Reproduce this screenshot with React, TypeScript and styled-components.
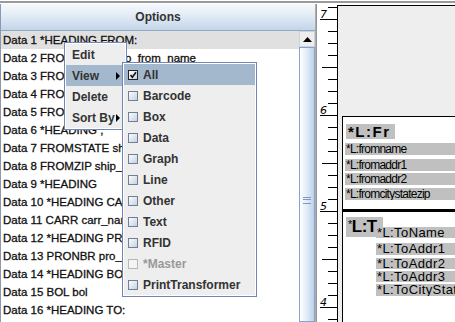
import React from 'react';
import styled, { createGlobalStyle } from 'styled-components';

const GlobalStyle = createGlobalStyle`
  html, body {
    margin: 0;
    padding: 0;
    background: #ffffff;
  }
  body {
    font-family: "Liberation Sans", Arial, sans-serif;
  }
`;

const Frame = styled.div`
  width: 455px;
  height: 322px;
  position: relative;
  overflow: hidden;
  background: #ffffff;
`;

const TopRule = styled.div`
  height: 2px;
  margin: 1px 0;
  background: #9a9a9a;
`;

const Main = styled.div`
  display: flex;
  height: 318px;
`;

const LeftPanel = styled.div`
  width: 314px;
  display: flex;
  flex-direction: column;
  border-left: 1px solid #8799b3;
`;

const Header = styled.div`
  height: 26px;
  display: flex;
  align-items: center;
  justify-content: center;
  font-weight: bold;
  font-size: 12px;
  color: #333333;
  background: linear-gradient(180deg, #f6f9fc 0%, #e2ebf5 45%, #c4d5e9 100%);
  border-bottom: 1px solid #93a8c2;
`;

const Body = styled.div`
  flex: 1;
  display: flex;
  min-height: 0;
`;

const List = styled.div`
  flex: 1;
  overflow: hidden;
`;

const Row = styled.div<{ $selected?: boolean }>`
  height: 18px;
  line-height: 18px;
  padding-left: 2px;
  font-size: 11.5px;
  color: #111111;
  -webkit-text-stroke: 0.3px #111111;
  white-space: nowrap;
  background: ${(p) => (p.$selected ? '#e0e0e0' : 'transparent')};
`;

const ScrollBar = styled.div`
  width: 16px;
  display: flex;
  flex-direction: column;
`;

const ArrowButton = styled.div`
  height: 16px;
  box-sizing: border-box;
  border: 1px solid #c9d3df;
  background: #eeeeee;
  display: flex;
  align-items: center;
  justify-content: center;
`;

const Thumb = styled.div`
  flex: 1;
  box-sizing: border-box;
  border: 1px solid #86a3cf;
  background: linear-gradient(90deg, #ffffff 0%, #e4edf8 45%, #bcd1ea 100%);
  position: relative;
`;

const Grip = styled.div`
  position: absolute;
  left: 3px;
  top: 149px;
  width: 8px;
  height: 5px;
  border-top: 1px solid #7f98bf;
  border-bottom: 1px solid #7f98bf;
  &::after {
    content: '';
    position: absolute;
    left: 0;
    right: 0;
    top: 1px;
    border-top: 1px solid #7f98bf;
  }
`;

const Divider = styled.div`
  width: 2px;
  background: linear-gradient(90deg, #b8b8b8, #8a8a8a);
`;

const RulerBox = styled.div`
  width: 20px;
  background: #ffffff;
`;

const Canvas = styled.div`
  flex: 1;
  margin-top: 1px;
  position: relative;
  background: #eeeeee;
  border-top: 1px solid #000000;
  border-left: 1px solid #000000;
  overflow: hidden;
`;

const Label = styled.div`
  position: absolute;
  left: 4px;
  top: 110px;
  right: 0;
  bottom: 0;
  background: #ffffff;
  border-top: 1px solid #000000;
  border-left: 1px solid #000000;
`;

const Field = styled.div<{ $left: number; $top: number; $height: number }>`
  position: absolute;
  left: ${(p) => p.$left}px;
  top: ${(p) => p.$top}px;
  height: ${(p) => p.$height}px;
  right: 0;
  background: #c0c0c0;
  white-space: nowrap;
  overflow: hidden;
  color: #000000;
`;

const SmallField = styled(Field)`
  font-size: 12px;
  line-height: 12px;
  letter-spacing: -0.75px;
  padding-left: 1px;
`;

const ToField = styled(Field)`
  font-size: 13px;
  line-height: 12px;
  letter-spacing: 0.4px;
  padding-left: 1px;
`;

const HeadBox = styled.div<{ $left: number; $top: number; $width: number; $height: number; $size: number; $spacing: number }>`
  position: absolute;
  left: ${(p) => p.$left}px;
  top: ${(p) => p.$top}px;
  width: ${(p) => p.$width}px;
  height: ${(p) => p.$height}px;
  line-height: ${(p) => p.$height}px;
  font-size: ${(p) => p.$size}px;
  font-weight: bold;
  letter-spacing: ${(p) => p.$spacing}px;
  padding-left: 2px;
  box-sizing: border-box;
  background: #c0c0c0;
  overflow: hidden;
  white-space: nowrap;
`;

const Star = styled.span`
  font-size: 11px;
  font-weight: normal;
  vertical-align: top;
  line-height: 14px;
`;

const Rule = styled.div`
  position: absolute;
  left: 0;
  right: 0;
  top: 92px;
  height: 3px;
  background: #000000;
`;

const Menu = styled.div<{ $left: number; $top: number; $width: number }>`
  position: absolute;
  left: ${(p) => p.$left}px;
  top: ${(p) => p.$top}px;
  width: ${(p) => p.$width}px;
  box-sizing: border-box;
  padding: 1px;
  background: #eeeeee;
  border: 1px solid #7186b4;
  box-shadow: inset 0 0 0 1px #ffffff;
`;

const MenuItem = styled.div<{ $active?: boolean; $disabled?: boolean }>`
  height: 21px;
  display: flex;
  align-items: center;
  font-size: 12px;
  font-weight: bold;
  white-space: nowrap;
  color: ${(p) => (p.$disabled ? '#999999' : '#333333')};
  background: ${(p) => (p.$active ? '#a3b8cc' : 'transparent')};
`;

const ItemText = styled.span`
  flex: 1;
  padding-left: 6px;
`;

const Arrow = styled.span`
  width: 0;
  height: 0;
  margin-right: 5px;
  border-top: 4px solid transparent;
  border-bottom: 4px solid transparent;
  border-left: 4px solid #000000;
`;

const CheckItemText = styled.span`
  padding-left: 5px;
`;

const CheckWrap = styled.span`
  display: flex;
  margin-left: 4px;
`;

const Check = ({ checked, disabled }: { checked?: boolean; disabled?: boolean }) => (
  <CheckWrap>
    <svg width="10" height="10" viewBox="0 0 10 10">
      <defs>
        <linearGradient id="cbg" x1="0" y1="0" x2="1" y2="1">
          <stop offset="0" stopColor="#ffffff" />
          <stop offset="1" stopColor="#c3cedd" />
        </linearGradient>
      </defs>
      <rect
        x="0.5"
        y="0.5"
        width="9"
        height="9"
        fill={disabled ? '#f4f4f4' : 'url(#cbg)'}
        stroke={checked ? '#222222' : disabled ? '#b8b8b8' : '#6f7f96'}
      />
      {checked && <path d="M2.5 5 L4.3 7.2 L8 2.2" fill="none" stroke="#111111" strokeWidth="1.6" />}
    </svg>
  </CheckWrap>
);

const rows = [
  'Data 1 *HEADING FROM:',
  'Data 2 FROMNAME ship_from_name',
  'Data 3 FROMADDR1 ship_from_addr1',
  'Data 4 FROMADDR2 ship_from_addr2',
  'Data 5 FROMCITY ship_from_city',
  'Data 6 *HEADING ,',
  'Data 7 FROMSTATE ship_from_state',
  'Data 8 FROMZIP ship_from_zip',
  'Data 9 *HEADING',
  'Data 10 *HEADING CARRIER:',
  'Data 11 CARR carr_name',
  'Data 12 *HEADING PRO:',
  'Data 13 PRONBR pro_number',
  'Data 14 *HEADING BOL:',
  'Data 15 BOL bol',
  'Data 16 *HEADING TO:',
];

const viewItems = [
  'All',
  'Barcode',
  'Box',
  'Data',
  'Graph',
  'Line',
  'Other',
  'Text',
  'RFID',
  '*Master',
  'PrintTransformer',
];

const Ruler = () => {
  const ticks = [];
  for (let k = 0; k < 27; k++) {
    const y = 3 + k * 12;
    const phase = (y - 15) % 96;
    const x1 = phase === 0 ? 3 : phase === 48 || phase === -48 ? 5 : 11;
    ticks.push(<line key={k} x1={x1} x2={20} y1={y + 0.5} y2={y + 0.5} stroke="#000" strokeWidth="1" />);
  }
  const nums = [
    { n: '7', y: 14 },
    { n: '6', y: 110 },
    { n: '5', y: 206 },
    { n: '4', y: 302 },
  ];
  return (
    <svg width="20" height="318">
      {ticks}
      {nums.map((d) => (
        <text key={d.n} x="3" y={d.y} fontSize="11" fontFamily="DejaVu Sans, sans-serif" fontStyle="italic" fill="#000">
          {d.n}
        </text>
      ))}
    </svg>
  );
};

export default function App() {
  return (
    <Frame>
      <GlobalStyle />
      <TopRule />
      <Main>
        <LeftPanel>
          <Header>Options</Header>
          <Body>
            <List>
              {rows.map((r, i) => (
                <Row key={r} $selected={i === 0}>
                  {r}
                </Row>
              ))}
            </List>
            <ScrollBar>
              <ArrowButton>
                <svg width="9" height="5" viewBox="0 0 9 5">
                  <path d="M0 5 L4.5 0 L9 5 Z" fill="#000" />
                </svg>
              </ArrowButton>
              <Thumb>
                <Grip />
              </Thumb>
            </ScrollBar>
          </Body>
        </LeftPanel>
        <Divider />
        <RulerBox>
          <Ruler />
        </RulerBox>
        <Canvas>
          <Label>
            <HeadBox $left={3} $top={7} $width={49} $height={15} $size={15} $spacing={1.5}>
              *L:Fr
            </HeadBox>
            <SmallField $left={2} $top={26} $height={12}>*L:fromname</SmallField>
            <SmallField $left={2} $top={42} $height={12}>*L:fromaddr1</SmallField>
            <SmallField $left={2} $top={56} $height={12}>*L:fromaddr2</SmallField>
            <SmallField $left={2} $top={71} $height={12}>*L:fromcitystatezip</SmallField>
            <Rule />
            <HeadBox $left={3} $top={100} $width={37} $height={20} $size={17} $spacing={-0.5}>
              <Star>*</Star>L:T
            </HeadBox>
            <ToField $left={33} $top={110} $height={11}>*L:ToName</ToField>
            <ToField $left={33} $top={126} $height={12}>*L:ToAddr1</ToField>
            <ToField $left={33} $top={141} $height={11}>*L:ToAddr2</ToField>
            <ToField $left={33} $top={154} $height={11}>*L:ToAddr3</ToField>
            <ToField $left={33} $top={167} $height={12}>*L:ToCityStateZip</ToField>
          </Label>
        </Canvas>
      </Main>

      <Menu $left={64} $top={42} $width={63}>
        <MenuItem>
          <ItemText>Edit</ItemText>
        </MenuItem>
        <MenuItem $active>
          <ItemText>View</ItemText>
          <Arrow />
        </MenuItem>
        <MenuItem>
          <ItemText>Delete</ItemText>
        </MenuItem>
        <MenuItem>
          <ItemText>Sort By</ItemText>
          <Arrow />
        </MenuItem>
      </Menu>

      <Menu $left={122} $top={62} $width={135}>
        {viewItems.map((v, i) => (
          <MenuItem key={v} $active={i === 0} $disabled={v === '*Master'}>
            <Check checked={i === 0} disabled={v === '*Master'} />
            <CheckItemText>{v}</CheckItemText>
          </MenuItem>
        ))}
      </Menu>
    </Frame>
  );
}
